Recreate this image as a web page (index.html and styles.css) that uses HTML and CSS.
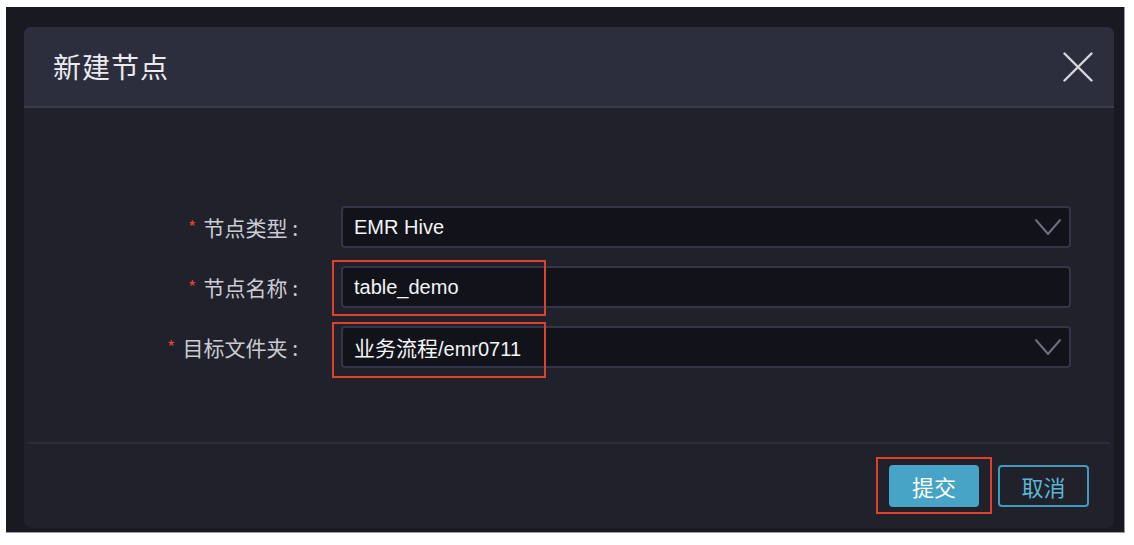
FILE: index.html
```html
<!DOCTYPE html>
<html lang="zh">
<head>
<meta charset="utf-8">
<link rel="stylesheet" href="styles.css">
</head>
<body>
<div class="frame">
  <div class="dialog">
    <div class="header">
      <div class="title">新建节点</div>
      <svg class="close" width="30" height="30" viewBox="0 0 30 30"><path d="M1.5 1.5 L28.5 28.5 M28.5 1.5 L1.5 28.5" stroke="#d6d7dc" stroke-width="2.4" stroke-linecap="round" fill="none"/></svg>
    </div>
    <div class="body">
      <div class="form">
        <div class="label"><span class="req">*</span>节点类型 :</div>
        <div class="field select">
          <span class="value">EMR Hive</span>
          <svg class="chev" width="28" height="18" viewBox="0 0 28 18"><path d="M1.5 1.5 L14 16 L26.5 1.5" stroke="#6c6e80" stroke-width="2" fill="none" stroke-linejoin="round"/></svg>
        </div>
        <div class="label"><span class="req">*</span>节点名称 :</div>
        <div class="field">
          <span class="value">table_demo</span>
          <div class="mark mark-a"></div>
        </div>
        <div class="label"><span class="req">*</span>目标文件夹 :</div>
        <div class="field select">
          <span class="value"><span class="cjk">业务流程</span>/emr0711</span>
          <svg class="chev" width="28" height="18" viewBox="0 0 28 18"><path d="M1.5 1.5 L14 16 L26.5 1.5" stroke="#6c6e80" stroke-width="2" fill="none" stroke-linejoin="round"/></svg>
          <div class="mark mark-b"></div>
        </div>
      </div>
    </div>
    <div class="footer">
      <div class="btn-wrap">
        <button class="btn primary">提交</button>
        <div class="mark mark-c"></div>
      </div>
      <button class="btn ghost">取消</button>
    </div>
  </div>
</div>
</body>
</html>
```

FILE: styles.css
```css
html, body {
  margin: 0;
  padding: 0;
  background: #ffffff;
}
body {
  font-family: "Liberation Sans", "Noto Sans CJK SC", sans-serif;
}
.frame {
  margin: 7px 0 0 6px;
  width: 1119px;
  height: 526px;
  box-sizing: border-box;
  background: #181921;
  padding: 20px 11px 0 18px;
  border-right: 1px solid #9a9a9a;
  border-bottom: 1px solid #9a9a9a;
}
.dialog {
  width: 1090px;
  height: 501px;
  background: #20212b;
  border-radius: 7px;
  display: flex;
  flex-direction: column;
  overflow: hidden;
}
.header {
  height: 79px;
  background: #2d2e3d;
  border-bottom: 2px solid #3a3b4c;
  display: flex;
  align-items: center;
  justify-content: space-between;
  padding: 0 21px 0 29px;
  flex-shrink: 0;
}
.title {
  color: #ebebef;
  font-size: 28px;
  font-family: "Noto Sans CJK SC", sans-serif;
  letter-spacing: 1px;
  margin-top: -2px;
}
.close {
  display: block;
}
.body {
  flex: 1;
  padding: 98px 39px 0 0;
  margin: 0 4px;
  border-bottom: 2px solid #2c2d3b;
}
.form {
  display: grid;
  grid-template-columns: 274px 1fr;
  column-gap: 43px;
  row-gap: 18px;
  align-items: center;
  margin-left: -4px;
}
.label {
  text-align: right;
  color: #cbccd3;
  font-size: 21px;
  font-family: "Noto Sans CJK SC", sans-serif;
  white-space: nowrap;
}
.req {
  color: #e0432c;
  font-size: 18px;
  margin-right: 7px;
  position: relative;
  top: -2px;
}
.field {
  position: relative;
  height: 42px;
  box-sizing: border-box;
  background: #12131a;
  border: 2px solid #33354a;
  border-radius: 4px;
  display: flex;
  align-items: center;
  padding: 0 7px 0 11px;
}
.value {
  color: #f4f4f6;
  font-size: 20px;
  flex: 1;
  white-space: nowrap;
}
.cjk {
  font-size: 21px;
  font-family: "Noto Sans CJK SC", sans-serif;
}
.chev {
  display: block;
}
.mark {
  position: absolute;
  border: 2px solid #e0412a;
  box-sizing: border-box;
  pointer-events: none;
}
.mark-a {
  left: -11px;
  top: -8px;
  width: 214px;
  height: 56px;
}
.mark-b {
  left: -11px;
  top: -6px;
  width: 214px;
  height: 56px;
}
.footer {
  height: 84px;
  flex-shrink: 0;
  display: flex;
  justify-content: flex-end;
  align-items: flex-start;
  gap: 19px;
  padding: 21px 25px 0 0;
  box-sizing: border-box;
}
.btn-wrap {
  position: relative;
}
.btn {
  height: 42px;
  width: 90px;
  border-radius: 4px;
  font-size: 22px;
  font-family: "Noto Sans CJK SC", sans-serif;
  padding: 0;
  cursor: pointer;
  display: block;
}
.primary {
  background: #47a4c6;
  border: none;
  color: #ffffff;
}
.ghost {
  background: transparent;
  border: 2px solid #3f9cbd;
  color: #5ab6d6;
  width: 91px;
}
.mark-c {
  left: -13px;
  top: -8px;
  width: 116px;
  height: 57px;
}
```
